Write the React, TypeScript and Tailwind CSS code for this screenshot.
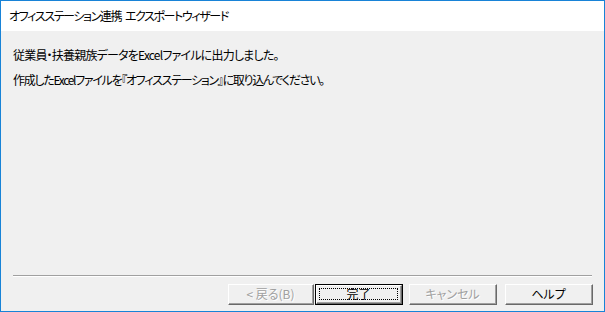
import React from "react";

const font = {
  fontFamily: '"Noto Sans CJK JP", "Noto Sans", sans-serif',
};

function Btn({
  label,
  disabled,
  isDefault,
  className,
}: {
  label: string;
  disabled?: boolean;
  isDefault?: boolean;
  className?: string;
}) {
  const face = (
    <div className="flex-1 flex border-t border-l border-t-white border-l-white border-b border-r border-b-[#696969] border-r-[#696969]">
      <div className="flex-1 flex border-b border-r border-b-[#a0a0a0] border-r-[#a0a0a0] bg-[#f0f0f0] p-[2px]">
        <div
          className={
            "flex-1 flex items-center justify-center text-[12px] leading-none " +
            (isDefault ? "border border-dotted border-black" : "border border-transparent") +
            (disabled ? " text-[#a0a0a0] [text-shadow:1px_1px_0_#ffffff]" : " text-black")
          }
        >
          {label}
        </div>
      </div>
    </div>
  );
  return (
    <div className={"h-[21px] flex " + (isDefault ? "border border-black " : "") + (className ?? "")}>
      {face}
    </div>
  );
}

export default function App() {
  return (
    <div
      className="w-[605px] h-[312px] flex flex-col border border-[#1883d7] bg-[#f0f0f0] text-black [font-feature-settings:'palt']"
      style={font}
    >
      <div className="h-[30px] bg-white flex items-center px-[8px] text-[12px] tracking-[-1.4px]">
        <span>オフィスステーション連携</span>
        <span className="ml-[4px]">エクスポートウィザード</span>
      </div>
      <div className="flex-1 flex flex-col">
        <div className="pt-[16px] pl-[12px] flex flex-col gap-[9px] text-[12px] leading-[16px]">
          <div className="tracking-[-0.8px]">従業員・扶養親族データをExcelファイルに出力しました。</div>
          <div className="tracking-[-1.3px]">作成したExcelファイルを『オフィスステーション』に取り込んでください。</div>
        </div>
        <div className="flex-1" />
        <div className="mx-[12px] border-t border-[#a0a0a0] border-b border-b-white" />
        <div className="flex justify-end pt-[7px] pb-[6px] pr-[11px]">
          <Btn label="< 戻る(B)" disabled className="w-[86px] mr-[1px]" />
          <Btn label="完了" isDefault className="w-[88px] mr-[6px]" />
          <Btn label="キャンセル" disabled className="w-[88px] mr-[8px]" />
          <Btn label="ヘルプ" className="w-[88px]" />
        </div>
      </div>
    </div>
  );
}
